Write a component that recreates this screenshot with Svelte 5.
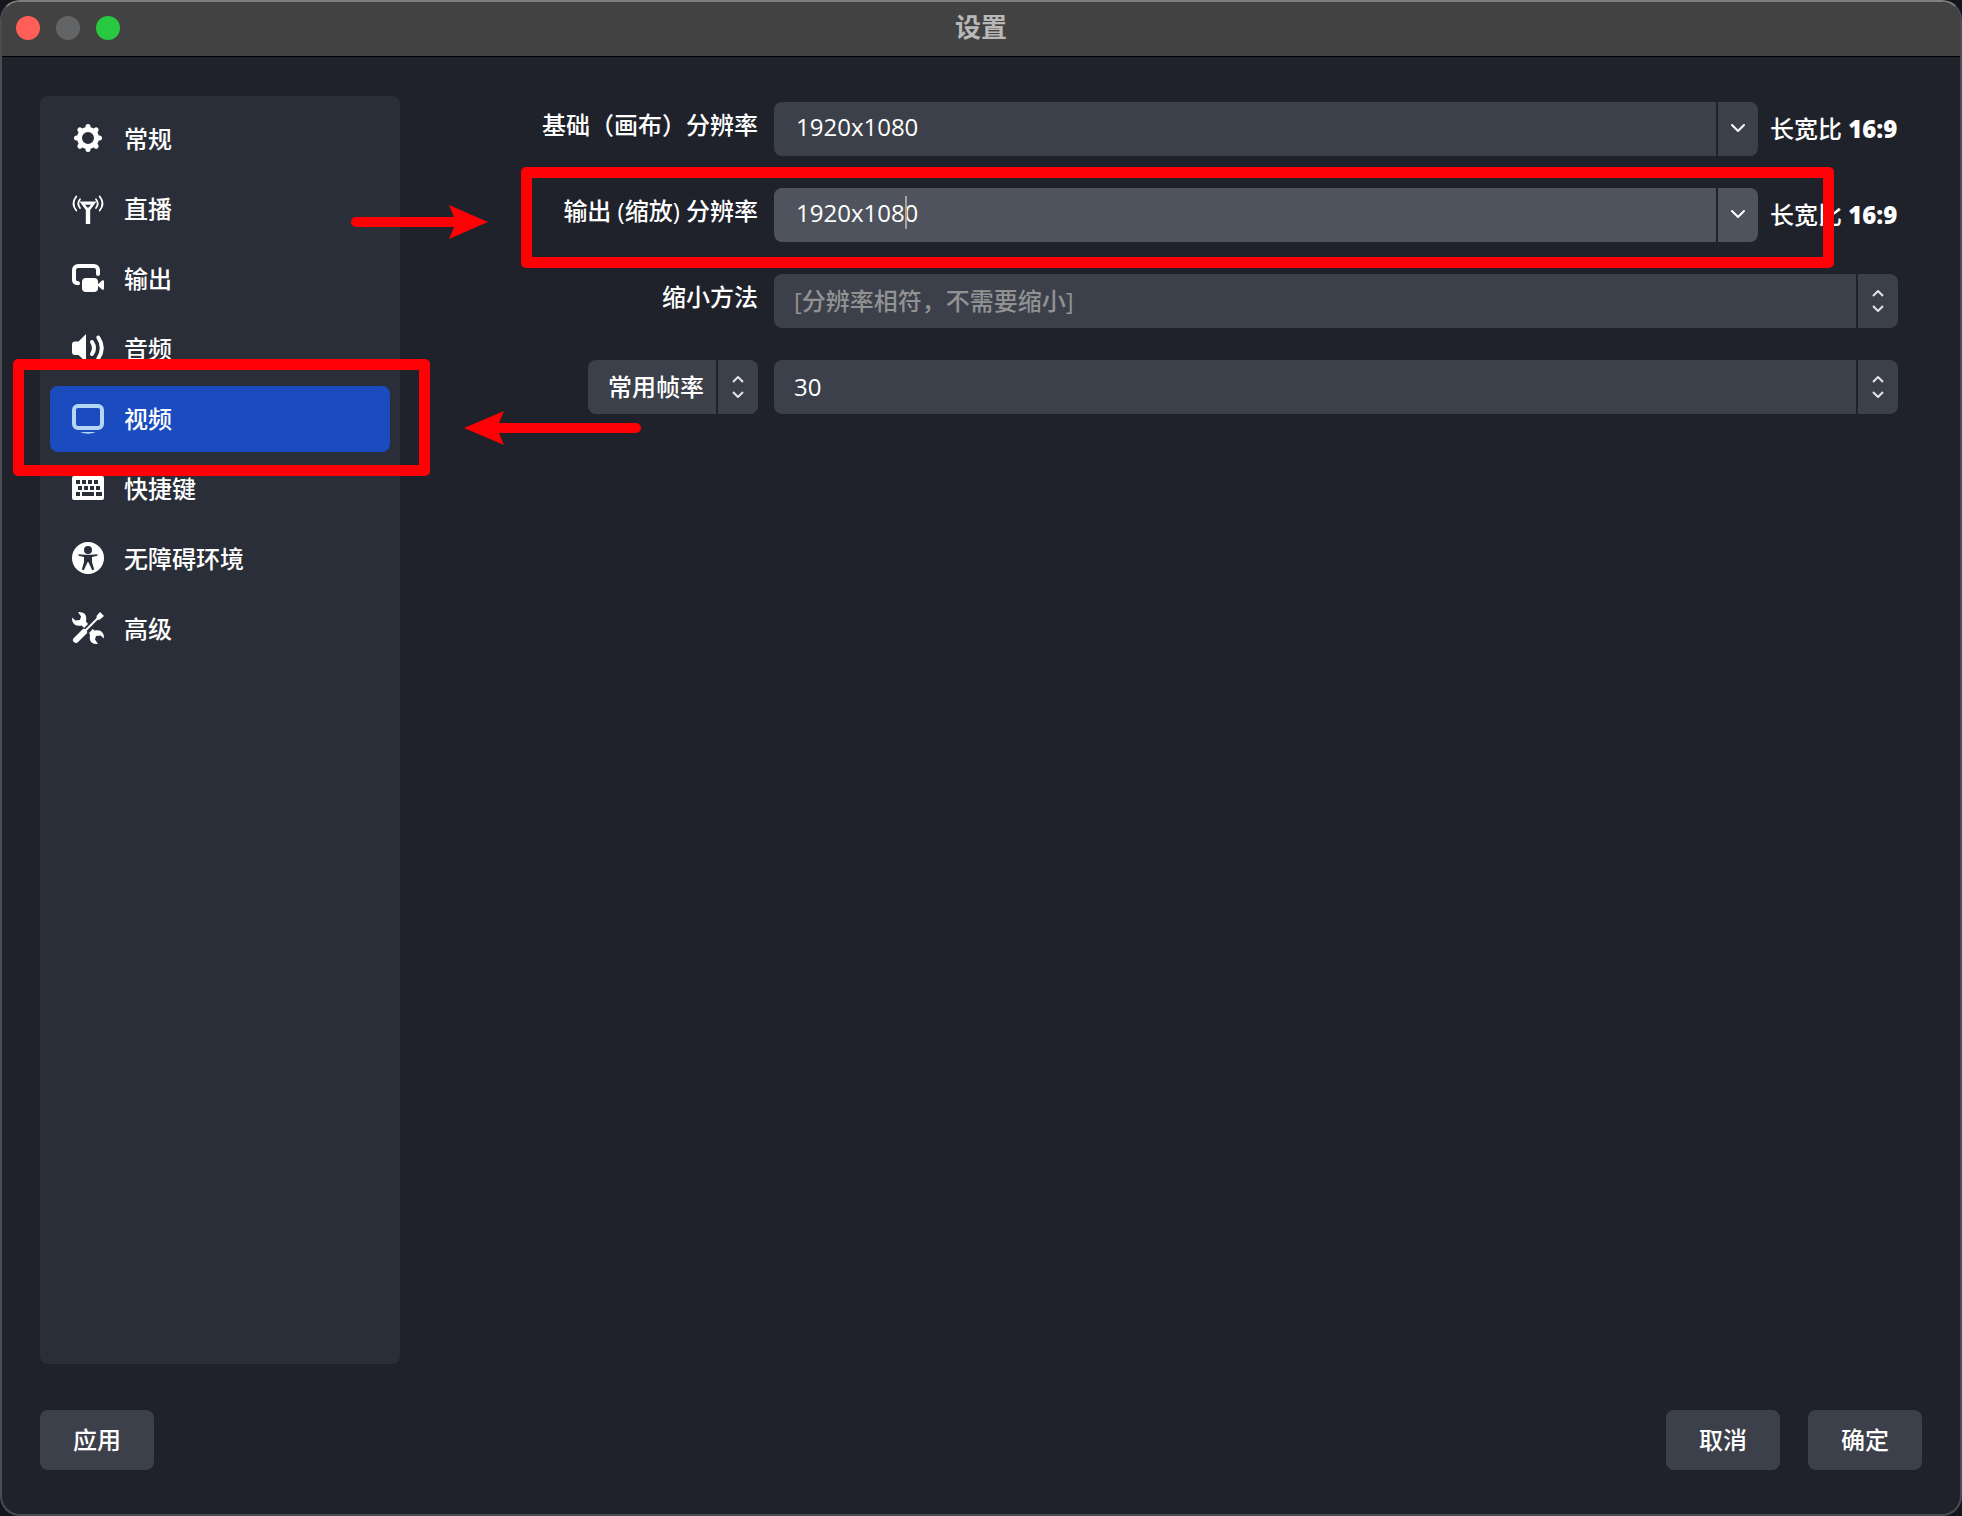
<script>
	const sections = [
		{ id: 'general', label: '常规' },
		{ id: 'stream', label: '直播' },
		{ id: 'output', label: '输出' },
		{ id: 'audio', label: '音频' },
		{ id: 'video', label: '视频' },
		{ id: 'hotkeys', label: '快捷键' },
		{ id: 'accessibility', label: '无障碍环境' },
		{ id: 'advanced', label: '高级' }
	];

	const resolutions = [
		{ id: 'base', label: '基础（画布）分辨率', marked: false },
		{ id: 'scaled', label: '输出 (缩放) 分辨率', marked: true }
	];

	const teeth = [0, 45, 90, 135, 180, 225, 270, 315];
	const keys = [
		[4, 7, 4], [10, 7, 4], [16, 7, 4], [22, 7, 4],
		[6, 13, 4], [12, 13, 4], [18, 13, 4], [24, 13, 4],
		[4, 19, 4], [10, 19, 12], [24, 19, 6]
	];

	let current = $state('video');
	let values = $state({ base: '1920x1080', scaled: '1920x1080' });
</script>

{#snippet icon(id)}
	<svg class="icon" viewBox="0 -1 32 32" aria-hidden="true">
		{#if id === 'general'}
			<circle class="line" cx="16" cy="15" r="8.5" stroke-width="5" />
			{#each teeth as angle}
				<path class="line" d="M16 5.5v-2" stroke-width="5" transform="rotate({angle} 16 15)" />
			{/each}
		{:else if id === 'stream'}
			<path fill-rule="evenodd" d="M7.5 8.5h17L18.2 17v14h-4.4V17zM13 11.8l3 3.2 3-3.2z" />
			<path class="line" d="M4.3 3.5Q-1.3 10.5 4.3 17.5M8 6.2Q4.6 10.5 8 15M27.7 3.5Q33.3 10.5 27.7 17.5M24 6.2Q27.4 10.5 24 15" stroke-width="1.8" />
		{:else if id === 'output'}
			<path class="line" d="M26 11V7a4 4 0 0 0-4-4H6a4 4 0 0 0-4 4v10q0 3 4 3.2" stroke-width="4" />
			<rect x="10" y="15" width="16" height="14" rx="4" />
			<path d="M25 22l5-4.5q2-1 2 1v7q0 2-2 1z" />
		{:else if id === 'audio'}
			<path d="M14 1v28l-7.5-7H3a3 3 0 0 1-3-3v-7.5a3 3 0 0 1 3-3h3.5z" />
			<path class="line" d="M20 9q4 6 0 12M26.3 4.5q7 10.5 0 21" stroke-width="4" />
		{:else if id === 'video'}
			<rect class="line" x="2" y="3" width="28" height="22" rx="4" stroke-width="4" />
			<path d="M8 29h16q-8 3.5-16 0z" />
		{:else if id === 'hotkeys'}
			<rect x="0" y="3" width="32" height="24" rx="2" />
			{#each keys as [x, y, width]}
				<rect class="hole" {x} {y} {width} height="4" />
			{/each}
		{:else if id === 'accessibility'}
			<circle cx="16" cy="15" r="16" />
			<circle class="hole" cx="16" cy="7" r="4" />
			<path class="hole" d="M6.5 11.2l6.5.6h6l6.5-.6v1.6L20 14v5l2.2 7.5-2 .7-3.7-8h-1l-3.7 8-2-.7L12 19v-5l-5.500-1.200z" />
		{:else}
			<path class="line" d="M4 27l8-8" stroke-width="6" />
			<path class="line" d="M12 19L27 4" stroke-width="2" />
			<path d="M24.5 3L28-1l4 4-4 3.5-3 .5z" />
			<path d="M6-1q8-.5 8.3 6l-.3 3.5 2 2.5-3.8 4-2.7-2.5Q2 14 .3 8L0 4.5l3.5 3 4.500-.5 1-3.500z" />
			<path transform="rotate(180 16 15)" d="M6-1q8-.5 8.3 6l-.3 3.5 1 1.5-3.800 4-1.700-1.500Q2 14 .3 8L0 4.5l3.5 3 4.500-.5 1-3.500z" />
		{/if}
	</svg>
{/snippet}

{#snippet stepper()}
	<span class="stepper">
		<svg viewBox="0 0 16 26" width="16" height="26" aria-hidden="true">
			<path class="line line--flat" d="M3 8l5-5 5 5M3 18l5 5 5-5" stroke-width="2" />
		</svg>
	</span>
{/snippet}

<div class="window">
	<header class="titlebar">
		<div class="lights">
			<button class="light light--close" aria-label="关闭"></button>
			<button class="light" aria-label="最小化" disabled></button>
			<button class="light light--zoom" aria-label="缩放"></button>
		</div>
		<h1>设置</h1>
	</header>

	<div class="content">
		<nav class="sidebar">
			{#each sections as section}
				<div class="entry">
					<button
						class="entry__button"
						class:entry__button--active={current === section.id}
						onclick={() => (current = section.id)}>
						{@render icon(section.id)}
						{section.label}
					</button>
					{#if section.id === 'video'}
						<div class="mark mark--entry"></div>
						<svg class="arrow arrow--left" viewBox="0 0 178 36" aria-hidden="true">
							<path d="M0 18L40 1l-5 12h137a5 5 0 0 1 0 10H35l5 12z" />
						</svg>
					{/if}
				</div>
			{/each}
		</nav>

		<form class="form" id="settings" onsubmit={(e) => e.preventDefault()}>
			{#each resolutions as res}
				<div class="row">
					<label class="row__label" for={res.id}>{res.label}</label>
					<div class="combo" class:combo--focus={res.marked}>
						<input id={res.id} type="text" bind:value={values[res.id]} />
						{#if res.marked}<span class="caret"></span>{/if}
						<button type="button" class="combo__toggle" aria-label="选择">
							<svg viewBox="0 0 16 10" width="16" height="10" aria-hidden="true">
								<path class="line" d="M2 2l6 6 6-6" stroke-width="2" />
							</svg>
						</button>
					</div>
					<span class="ratio">长宽比 <b>16:9</b></span>
					{#if res.marked}
						<div class="mark mark--row"></div>
						<svg class="arrow arrow--right" viewBox="0 0 138 36" aria-hidden="true">
							<path d="M137 18L98 1l5 12H5a5 5 0 0 0 0 10h98l-5 12z" />
						</svg>
					{/if}
				</div>
			{/each}

			<div class="row">
				<label class="row__label" for="filter">缩小方法</label>
				<div class="select">
					<select id="filter" disabled>
						<option>[分辨率相符，不需要缩小]</option>
					</select>
					{@render stepper()}
				</div>
			</div>

			<div class="row">
				<div class="row__type">
					<div class="select">
						<select aria-label="帧率类型">
							<option>常用帧率</option>
						</select>
						{@render stepper()}
					</div>
				</div>
				<div class="select">
					<select aria-label="常用帧率">
						<option>30</option>
					</select>
					{@render stepper()}
				</div>
			</div>
		</form>
	</div>

	<footer class="footer">
		<button class="action">应用</button>
		<div class="footer__right">
			<button class="action">取消</button>
			<button class="action" type="submit" form="settings">确定</button>
		</div>
	</footer>
</div>

<style>
	:global(body) {
		background: #14151d;
	}
	.window {
		--bg: #1f222a;
		--panel: #2a2e38;
		--control: #3c404b;
		--focus: #4f535e;
		--active: #1a4bbf;
		background: var(--bg);
		border: 2px solid #4a4c54;
		border-top-color: #7d7d7d;
		border-radius: 20px;
		box-sizing: border-box;
		color: #fff;
		display: flex;
		flex-direction: column;
		font: 500 24px/32px "Open Sans", "Noto Sans CJK SC", sans-serif;
		min-height: 100vh;
		overflow: hidden;
	}
	button,
	input,
	select {
		border: 0;
		border-radius: 0;
		box-sizing: border-box;
		color: inherit;
		font: inherit;
		margin: 0;
		outline: 0;
		padding: 0;
	}
	svg {
		fill: currentColor;
	}
	.line {
		fill: none;
		stroke: currentColor;
		stroke-linecap: round;
		stroke-linejoin: round;
	}
	.line--flat {
		stroke-linecap: butt;
	}

	.titlebar {
		align-items: center;
		background: #424242;
		border-bottom: 1px solid #000;
		box-sizing: border-box;
		display: grid;
		grid-template-columns: 1fr auto 1fr;
		height: 55px;
		padding: 0 14px 2px;
	}
	.lights {
		display: flex;
		gap: 16px;
	}
	.light {
		background: #636466;
		border-radius: 50%;
		height: 24px;
		width: 24px;
	}
	.light--close {
		background: #ff5f57;
	}
	.light--zoom {
		background: #28c840;
	}
	h1 {
		color: #b8b8b8;
		font-size: 26px;
		font-weight: 700;
		line-height: 32px;
		margin: 0;
		padding-bottom: 2px;
	}

	.content {
		display: flex;
		flex: 1;
		gap: 40px;
		padding: 39px 62px 46px 38px;
	}
	.sidebar {
		background: var(--panel);
		border-radius: 8px;
		box-sizing: border-box;
		display: flex;
		flex: 0 0 360px;
		flex-direction: column;
		gap: 4px;
		padding: 10px;
	}
	.entry {
		position: relative;
	}
	.entry__button {
		align-items: center;
		background: none;
		border-radius: 8px;
		display: flex;
		gap: 20px;
		height: 66px;
		padding: 0 22px;
		text-align: left;
		width: 100%;
	}
	.entry__button--active {
		background: var(--active);
	}
	.entry__button--active .icon {
		color: #b3d6f5;
	}
	.icon {
		flex: none;
		height: 32px;
		overflow: visible;
		padding-bottom: 2px;
		width: 32px;
	}
	.hole {
		fill: var(--panel);
	}

	.form {
		display: flex;
		flex: 1;
		flex-direction: column;
		gap: 32px;
		min-width: 0;
		padding-top: 6px;
	}
	.row {
		display: flex;
		height: 54px;
		position: relative;
	}
	.row__label,
	.row__type {
		box-sizing: border-box;
		flex: 0 0 318px;
		margin-right: 16px;
	}
	.row__label {
		padding-top: 7px;
		text-align: right;
	}
	.row__type {
		display: flex;
		justify-content: flex-end;
	}
	.row__type .select {
		flex: 0 0 170px;
	}
	.combo {
		display: flex;
		flex: 1;
		gap: 2px;
		position: relative;
	}
	.combo input,
	.combo__toggle {
		background: var(--control);
	}
	.combo--focus input,
	.combo--focus .combo__toggle {
		background: var(--focus);
	}
	.combo input {
		border-radius: 8px 0 0 8px;
		flex: 1;
		min-width: 0;
		padding: 0 22px 4px;
	}
	.combo__toggle {
		border-radius: 0 8px 8px 0;
		display: grid;
		place-items: center;
		padding-bottom: 2px;
		width: 40px;
	}
	.caret {
		background: #ada594;
		height: 33px;
		left: 131px;
		position: absolute;
		top: 8px;
		width: 2px;
	}
	.ratio {
		align-self: center;
		flex: 0 0 128px;
		margin-left: 12px;
		white-space: nowrap;
	}
	.ratio b {
		font-weight: 800;
	}
	.select {
		display: grid;
		flex: 1;
	}
	.select select,
	.stepper {
		grid-area: 1 / 1;
	}
	.select select {
		appearance: none;
		background: var(--control);
		border-radius: 8px;
		opacity: 1;
		padding: 0 42px 0 20px;
		width: 100%;
	}
	.select select:disabled {
		color: #929292;
	}
	.stepper {
		border-left: 2px solid var(--bg);
		color: #e4e4e6;
		display: grid;
		justify-self: end;
		place-items: center;
		pointer-events: none;
		width: 40px;
	}

	.mark {
		border: 11px solid #ff0005;
		border-radius: 5px;
		pointer-events: none;
		position: absolute;
		z-index: 1;
	}
	.mark--entry {
		inset: -27px -40px -24px -37px;
	}
	.mark--row {
		inset: -21px 64px -26px 81px;
	}
	.arrow {
		fill: #ff0005;
		height: 36px;
		pointer-events: none;
		position: absolute;
		z-index: 1;
	}
	.arrow--left {
		left: 414px;
		top: 24px;
		width: 178px;
	}
	.arrow--right {
		left: -89px;
		top: 16px;
		width: 138px;
	}

	.footer {
		display: flex;
		justify-content: space-between;
		padding: 0 38px 44px;
	}
	.footer__right {
		display: flex;
		gap: 28px;
	}
	.action {
		background: var(--control);
		border-radius: 8px;
		height: 60px;
		min-width: 114px;
	}
</style>
